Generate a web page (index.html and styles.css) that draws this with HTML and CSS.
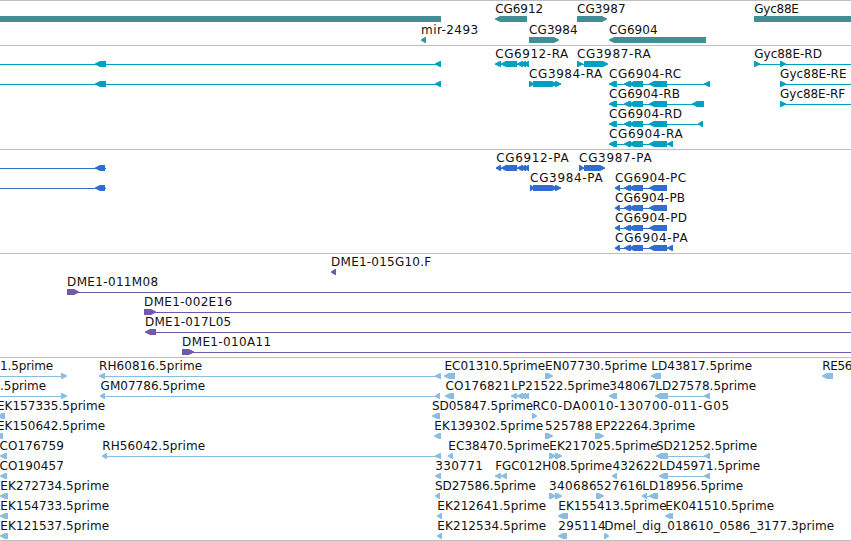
FILE: index.html
```
<!DOCTYPE html>
<html lang="en">
<head>
    <meta charset="UTF-8">
    <meta name="viewport" content="width=device-width, initial-scale=1.0">
    <title>Genome Browser</title>
    <link rel="stylesheet" href="styles.css">
</head>
<body>
    <main class="browser">
        <section class="track genes" id="genes"></section>
        <section class="track transcripts" id="transcripts"></section>
        <section class="track proteins" id="proteins"></section>
        <section class="track clones" id="clones"></section>
        <section class="track ests" id="ests"></section>
    </main>
    <script src="tracks.js"></script>
</body>
</html>
```
FILE: styles.css
```
body {
    margin: 0;
    background-color: #fff;
    font-family: "DejaVu Sans", sans-serif;
    overflow: hidden;
}
.browser {
    display: flex;
    flex-direction: column;
    width: 851px;
    border-bottom: 1px solid #bebebe;
}
.track {
    display: flex;
    flex-direction: column;
    border-top: 1px solid #bebebe;
    padding-bottom: 3px;
}
.row {
    display: block;
    width: 851px;
    height: 20px;
    overflow: visible;
}
.row text {
    fill: #111;
    font-size: 12px;
}
.genes {
    fill: #3f8f94;
    padding-bottom: 2px;
}
.genes .row {
    height: 21px;
}
.transcripts {
    fill: #00a0c0;
}
.proteins {
    fill: #316dce;
}
.clones {
    fill: #7559a9;
}
.ests {
    fill: #8abddf;
    padding-bottom: 2px;
}
```
FILE: tracks.js
```
// feature: [label, label start, label end, strand, blocks, line]
const gyc = [[780, 786]];
const longGene = ['', 0, 0, '-', [[95, 106], [435, 441]], [0, 441]];
const longProtein = ['', 0, 0, '-', [[95, 105]], [0, 106]];
const eno = [[624, 631], [629, 643], [649, 667]];

const tracks = {
    genes: [
        [
            ['', 0, 0, '-', [[-10, 441]]],
            ['CG6912', 495.7, 542.5, '-', [[495, 527]]],
            ['CG3987', 577.3, 625, '+', [[577, 607]]],
            ['Gyc88E', 754.7, 798.3, '+', [[754, 870]]]
        ],
        [
            ['mir-2493', 421.5, 477.5, '-', [[421, 426]]],
            ['CG3984', 529.5, 577, '+', [[529, 559]]],
            ['CG6904', 609.5, 657, '-', [[609, 706]]]
        ]
    ],
    transcripts: [
        [
            longGene,
            ['CG6912-RA', 495.7, 567.7, '-', [[495, 501], [501, 517], [517, 523], [521, 526], [524, 529]], [495, 529]],
            ['CG3987-RA', 577.3, 650, '+', [[577, 583], [584, 608]], [577, 607]],
            ['Gyc88E-RD', 754.7, 821.3, '+', [[754, 760], [780, 786]], [754, 851]]
        ],
        [
            longGene,
            ['CG3984-RA', 529.5, 601.7, '+', [[529, 534], [533, 557], [555, 561]], [529, 561]],
            ['CG6904-RC', 609.5, 680.5, '-', [[609, 617], ...eno, [704, 710]], [609, 710]],
            ['Gyc88E-RE', 780.5, 846, '+', gyc, [780, 851]]
        ],
        [
            ['CG6904-RB', 609.5, 679.5, '-', [[609, 617], ...eno, [692, 704]], [609, 704]],
            ['Gyc88E-RF', 780.5, 844.5, '+', gyc, [780, 851]]
        ],
        [['CG6904-RD', 609.5, 681.5, '-', [[609, 617], ...eno, [698, 703]], [609, 703]]],
        [['CG6904-RA', 609.5, 682, '-', [[609, 617], ...eno, [667, 673]], [609, 673]]]
    ],
    proteins: [
        [
            longProtein,
            ['CG6912-PA', 496.7, 568, '-', [[496, 501], [501, 517], [517, 523], [521, 526], [524, 529]], [496, 529]],
            ['CG3987-PA', 579.5, 651, '+', [[579, 584], [584, 605]], [579, 605]]
        ],
        [
            longProtein,
            ['CG3984-PA', 530.5, 602, '+', [[530, 534], [533, 557], [555, 561]], [530, 561]],
            ['CG6904-PC', 615.5, 685.5, '-', [[615, 620], ...eno], [615, 667]]
        ],
        [['CG6904-PB', 615.5, 684.5, '-', [[615, 620], ...eno], [615, 667]]],
        [['CG6904-PD', 615.5, 686.5, '-', [[615, 620], ...eno], [615, 667]]],
        [['CG6904-PA', 615.5, 687, '-', [[615, 620], ...eno, [667, 673]], [615, 673]]]
    ],
    clones: [
        [['DME1-015G10.F', 331.5, 430.5, '-', [[331, 336]]]],
        [['DME1-011M08', 67.5, 157.5, '+', [[67, 79]], [67, 851]]],
        [['DME1-002E16', 144.5, 231.5, '+', [[144, 156]], [144, 851]]],
        [['DME1-017L05', 145.5, 230.5, '-', [[145, 156]], [145, 851]]],
        [['DME1-010A11', 182.5, 270.5, '+', [[182, 194]], [182, 851]]]
    ],
    ests: [
        [
            ['1.5prime', 0.5, 52.5, '+', [[61, 67]], [0, 66]],
            ['RH60816.5prime', 99.5, 201.5, '-', [[99, 105], [435, 441]], [99, 441]],
            ['EC01310.5prime', 444.8, 544.5, '-', [[444, 455]]],
            ['EN07730.5prime', 545.5, 646.5, '+', [[545, 553]]],
            ['LD43817.5prime', 651.7, 751.5, '-', [[651, 661]]],
            ['RE56', 822.7, 851.7, '-', [[822, 833]]]
        ],
        [
            ['.5prime', 0.5, 45.5, '+', [[61, 67]], [0, 66]],
            ['GM07786.5prime', 101, 204.5, '-', [[100, 105], [435, 440]], [100, 440]],
            ['CO176821', 446, 509.5, '-', [[445, 454]]],
            ['LP21522.5prime', 511.7, 609.3, '-', [[511, 517], [517, 523], [521, 526], [524, 529]], [511, 529]],
            ['348067', 609.7, 655.3, '-', [[609, 617]]],
            ['LD27578.5prime', 655.7, 755.5, '-', [[655, 668], [704, 710]], [655, 710]]
        ],
        [
            ['EK157335.5prime', -2.7, 104.5, '-', [[-3, 5]]],
            ['SD05847.5prime', 432.3, 532.5, '-', [[432, 440]]],
            ['RC0-DA0010-130700-011-G05', 532.9, 728.5, '+', [[532, 537]]]
        ],
        [
            ['EK150642.5prime', -2.7, 104.5, '-', [[-4, 3]]],
            ['EK139302.5prime', 434.7, 542.5, '-', [[434, 441]]],
            ['525788', 545.5, 592, '+', [[545, 553]]],
            ['EP22264.3prime', 595.7, 694.5, '+', [[595, 604]]]
        ],
        [
            ['CO176759', 0, 63.3, '-', [[0, 7]]],
            ['RH56042.5prime', 102.7, 204.5, '-', [[102, 107], [435, 441]], [102, 441]],
            ['EC38470.5prime', 448.7, 549, '-', [[448, 453]]],
            ['EK217025.5prime', 549.7, 657, '+', [[549, 556], [555, 562]], [549, 561]],
            ['SD21252.5prime', 656.3, 756.5, '-', [[656, 668], [704, 710]], [656, 710]]
        ],
        [
            ['CO190457', 0, 63.3, '-', [[0, 7]]],
            ['330771', 435.7, 482.3, '-', [[435, 441]]],
            ['FGC012H08.5prime', 495.7, 611.5, '-', [[495, 501], [501, 507]], [495, 507]],
            ['432622', 613, 658.3, '-', [[612, 617]]],
            ['LD45971.5prime', 659.7, 759.5, '-', [[659, 668], [704, 710]], [659, 710]]
        ],
        [
            ['EK272734.5prime', 0.7, 108.5, '-', [[0, 8]]],
            ['SD27586.5prime', 435.3, 535.3, '-', [[435, 440]]],
            ['340686', 549.5, 596, '+', [[549, 556], [555, 562]], [549, 561]],
            ['527616', 596.7, 642.3, '+', [[596, 604]]],
            ['LD18956.5prime', 642.7, 742.5, '-', [[642, 647], [649, 658]], [642, 658]]
        ],
        [
            ['EK154733.5prime', 0.7, 108.5, '-', [[0, 8]]],
            ['EK212641.5prime', 437.7, 545.5, '-', [[437, 442]]],
            ['EK155413.5prime', 558.7, 666, '-', [[558, 568]]],
            ['EK041510.5prime', 665.7, 773.5, '-', [[665, 671], [668, 673]]]
        ],
        [
            ['EK121537.5prime', 0.7, 108.5, '-', [[0, 8]]],
            ['EK212534.5prime', 437.7, 545.5, '-', [[437, 442]]],
            ['295114', 558.7, 605, '-', [[558, 567]]],
            ['Dmel_dig_018610_0586_3177.3prime', 604.7, 833.5, '+', [[604, 609]]]
        ]
    ]
};

// block with its head pointing along the strand
function drawBlock(start, end, strand) {
    const head = Math.min(6, end - start);
    if (strand === '-') {
        return `<path d="M${start} 17.5L${start + head - 1} 15H${end}V21H${start + head - 1}L${start} 18.5Z"/>`;
    }
    return `<path d="M${end} 17.5L${end - head + 1} 15H${start}V21H${end - head + 1}L${end} 18.5Z"/>`;
}

function drawFeature([label, left, right, strand, blocks, line]) {
    let out = '';
    if (line) {
        out += `<rect x="${line[0]}" y="18" width="${line[1] - line[0]}" height="1"/>`;
    }
    out += blocks.map(([start, end]) => drawBlock(start, end, strand)).join('');
    if (label) {
        out += `<text x="${left - 0.4}" y="12" textLength="${right - left + 1}">${label}</text>`;
    }
    return out;
}

for (const id in tracks) {
    document.getElementById(id).innerHTML = tracks[id]
        .map(row => `<svg class="row">${row.map(drawFeature).join('')}</svg>`)
        .join('');
}
```
